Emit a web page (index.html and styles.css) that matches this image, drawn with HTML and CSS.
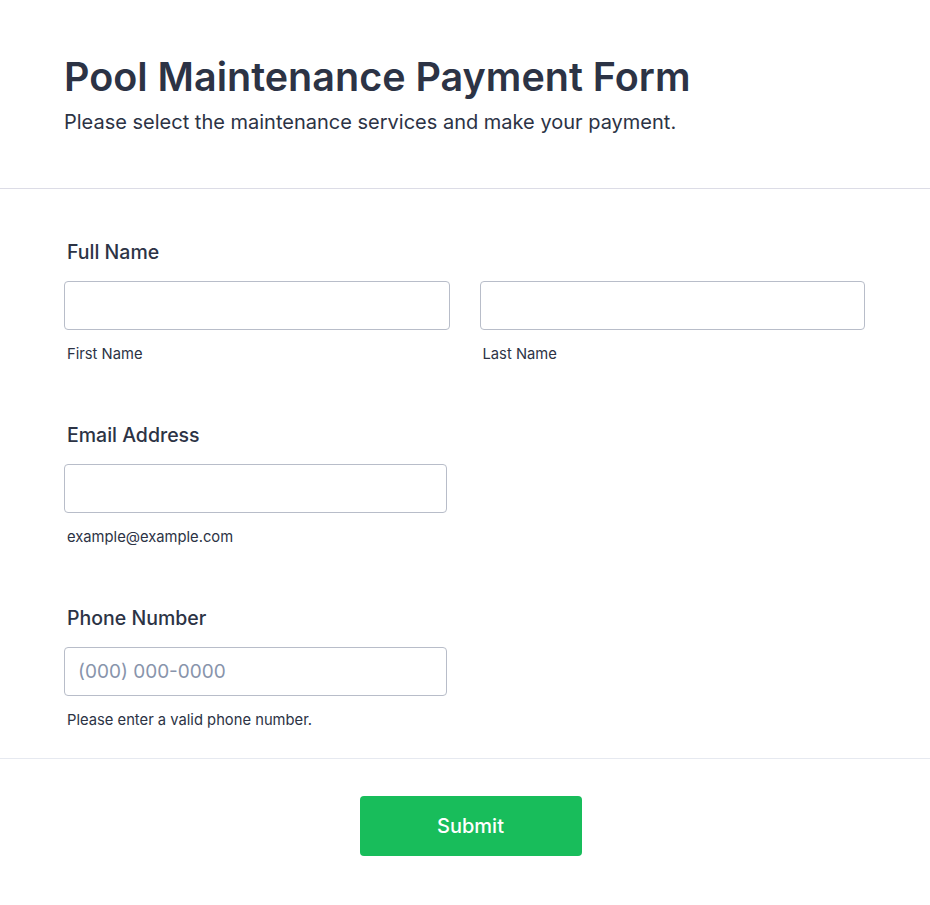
FILE: index.html
```html
<!DOCTYPE html>
<html lang="en">
<head>
    <meta charset="UTF-8">
    <meta name="viewport" content="width=device-width, initial-scale=1.0">
    <title>Pool Maintenance Payment Form</title>
    <link rel="stylesheet" href="styles.css">
</head>
<body>
    <div class="form-page">
        <div class="form-header">
            <h1>Pool Maintenance Payment Form</h1>
            <p class="subtitle">Please select the maintenance services and make your payment.</p>
        </div>

        <form class="form-body">
            <div class="field">
                <label class="field-label">Full Name</label>
                <div class="name-row">
                    <div class="sub-field">
                        <input type="text" class="text-input">
                        <span class="sub-label">First Name</span>
                    </div>
                    <div class="sub-field">
                        <input type="text" class="text-input">
                        <span class="sub-label">Last Name</span>
                    </div>
                </div>
            </div>

            <div class="field">
                <label class="field-label">Email Address</label>
                <div class="sub-field half">
                    <input type="email" class="text-input">
                    <span class="sub-label">example@example.com</span>
                </div>
            </div>

            <div class="field">
                <label class="field-label">Phone Number</label>
                <div class="sub-field half">
                    <input type="tel" class="text-input" placeholder="(000) 000-0000">
                    <span class="sub-label">Please enter a valid phone number.</span>
                </div>
            </div>
        </form>

        <div class="form-footer">
            <button type="button" class="submit-btn">Submit</button>
        </div>
    </div>
</body>
</html>
```

FILE: styles.css
```css
body {
    font-family: Inter, "Noto Sans", sans-serif;
    margin: 0;
    padding: 0;
    background-color: #fff;
    color: #2c3345;
}

.form-page {
    width: 100%;
}

.form-header {
    padding: 53px 64px 54px;
    border-bottom: 1px solid #dcdce6;
}

h1 {
    font-size: 39.5px;
    line-height: 48px;
    font-weight: 600;
    margin: 0 0 9px;
}

.subtitle {
    font-size: 20px;
    line-height: 24px;
    margin: 0;
}

.form-body {
    padding: 51px 65px 28px 64px;
    border-bottom: 1px solid #e6e9f0;
    display: flex;
    flex-direction: column;
    gap: 59px;
}

.field-label {
    display: block;
    font-size: 19.5px;
    line-height: 24px;
    font-weight: 500;
    margin: 0 0 17px 3px;
}

.name-row {
    display: flex;
    gap: 30px;
}

.sub-field {
    flex: 1;
    display: flex;
    flex-direction: column;
    gap: 14px;
}

.sub-field.half {
    width: 383px;
}

.text-input {
    box-sizing: border-box;
    width: 100%;
    height: 49px;
    border: 1px solid #b8bdc9;
    border-radius: 4px;
    padding: 0 13px;
    font-family: Inter, sans-serif;
    font-size: 19px;
    color: #2c3345;
}

.text-input::placeholder {
    color: #8894ab;
}

.sub-label {
    font-size: 14.75px;
    line-height: 20px;
    margin-left: 3px;
}

.form-footer {
    display: flex;
    justify-content: center;
    padding: 37px 0 49px 11px;
}

.submit-btn {
    width: 222px;
    height: 60px;
    background-color: #18bd5b;
    color: #fff;
    border: none;
    border-radius: 4px;
    font-family: Inter, sans-serif;
    font-size: 20px;
    font-weight: 500;
    cursor: pointer;
}
```
